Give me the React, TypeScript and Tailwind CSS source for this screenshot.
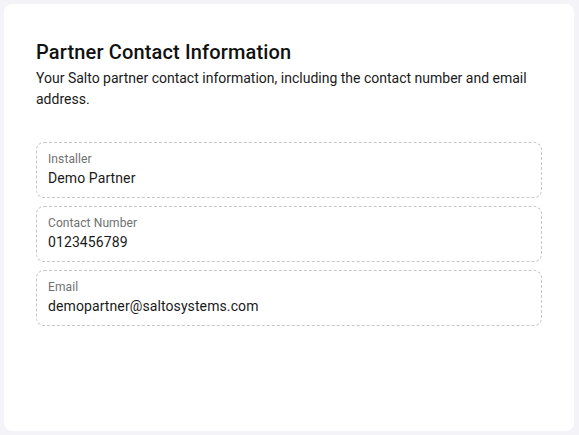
export default function App() {
  const fields = [
    { label: "Installer", value: "Demo Partner" },
    { label: "Contact Number", value: "0123456789" },
    { label: "Email", value: "demopartner@saltosystems.com" },
  ];
  return (
    <div
      className="w-[579px] h-[435px] bg-[#f3f3f8] p-[4px] pr-[5px]"
      style={{ fontFamily: "Roboto, 'Noto Sans', sans-serif" }}
    >
      <div className="h-full bg-white rounded-[8px] pt-[36px] px-[32px]">
        <h1 className="text-[20px] leading-[24px] font-medium text-[#111] tracking-[0.15px]">
          Partner Contact Information
        </h1>
        <p className="mt-[4px] text-[14px] leading-[21px] text-[#1a1a1a]">
          Your Salto partner contact information, including the contact number and email address.
        </p>
        <div className="mt-[32px] flex flex-col gap-[8px]">
          {fields.map((f) => (
            <div
              key={f.label}
              className="h-[56px] border border-dashed border-[#c6c6c6] rounded-[8px] px-[11px] pt-[8px]"
            >
              <div className="text-[12px] leading-[16px] text-[#707070] tracking-[0.1px]">{f.label}</div>
              <div className="text-[14px] leading-[20px] text-[#1a1a1a] mt-[1px] tracking-[0.1px]">{f.value}</div>
            </div>
          ))}
        </div>
      </div>
    </div>
  );
}
